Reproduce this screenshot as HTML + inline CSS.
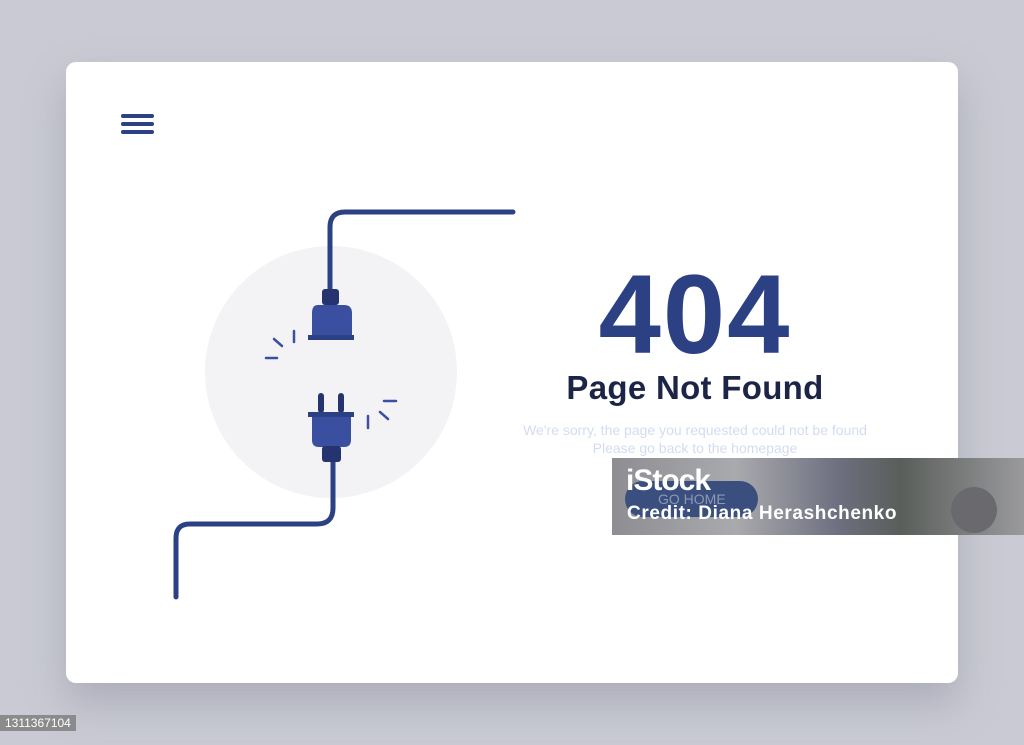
<!DOCTYPE html>
<html><head><style>
body{margin:0;width:1024px;height:745px;background:#c9cad3;position:relative;overflow:hidden;font-family:"Liberation Sans",sans-serif}
.card{position:absolute;left:66px;top:62px;width:892px;height:621px;background:#fff;border-radius:10px;box-shadow:0 20px 40px rgba(120,120,140,.35)}
.t404{position:absolute;left:540px;width:310px;top:250px;text-align:center;font-size:112px;font-weight:bold;color:#2c4084;letter-spacing:2px}
.pnf{position:absolute;left:510px;width:370px;top:369px;text-align:center;font-size:33px;font-weight:bold;color:#1d2547;letter-spacing:.3px}
.sub{position:absolute;left:500px;width:390px;top:421px;text-align:center;font-size:14px;line-height:18px;color:#d3dcf0}
.wm{position:absolute;left:612px;top:458px;width:412px;height:77px;background:linear-gradient(90deg,#8e8e92,#a9aaad 30%,#6e6f80 55%,#5a5e5a 70%,#9a9a9d);}
.wm .btn{position:absolute;left:13px;top:23px;width:133px;height:36px;border-radius:18px;background:#3a4f7e}
.wm .c{position:absolute;left:339px;top:29px;width:46px;height:46px;border-radius:50%;background:#6a6a6e}
.wm .i{position:absolute;left:14px;top:6px;color:#fff;font-size:30px;font-weight:bold;letter-spacing:-1px}
.wm .cr{position:absolute;left:15px;top:45px;color:#fff;font-size:19px;font-weight:bold;letter-spacing:.6px}
.wm .g{position:absolute;left:46px;top:33px;color:#8d97b5;font-size:14px}
.id{position:absolute;left:0;top:715px;background:#8b8b8e;color:#fff;font-size:12px;padding:1px 5px}
</style></head><body>
<div class="card"></div>
<svg style="position:absolute;left:0;top:0" width="1024" height="745">
<g stroke="#2c4084" stroke-width="4" stroke-linecap="round">
<line x1="123" y1="116" x2="152" y2="116"/><line x1="123" y1="124" x2="152" y2="124"/><line x1="123" y1="132" x2="152" y2="132"/>
</g>
<circle cx="331" cy="372" r="126" fill="#f3f3f6"/>
<path d="M513 212 H345 Q330 212 330 227 V292" fill="none" stroke="#2c4084" stroke-width="5" stroke-linecap="round"/>
<path d="M333 460 V508 Q333 524 317 524 H190 Q176 524 176 538 V597" fill="none" stroke="#2c4084" stroke-width="5" stroke-linecap="round"/>
<rect x="322" y="289" width="17" height="16" rx="3" fill="#25346e"/>
<path d="M318 305 H344 Q352 305 352 313 V336 H312 V313 Q312 305 318 305Z" fill="#3a4fa0"/>
<rect x="308" y="335" width="46" height="5" fill="#2c4084"/>
<rect x="318" y="393" width="6" height="20" rx="3" fill="#25346e"/>
<rect x="338" y="393" width="6" height="20" rx="3" fill="#25346e"/>
<rect x="308" y="412" width="46" height="5" fill="#2c4084"/>
<path d="M312 417 H351 V440 Q351 447 344 447 H319 Q312 447 312 440Z" fill="#3a4fa0"/>
<rect x="322" y="446" width="19" height="16" rx="3" fill="#25346e"/>
<g stroke="#3a4fa0" stroke-width="2.5" stroke-linecap="round">
<line x1="274" y1="339" x2="282" y2="346"/><line x1="294" y1="331" x2="294" y2="342"/><line x1="266" y1="358" x2="277" y2="358"/>
<line x1="384" y1="401" x2="396" y2="401"/><line x1="380" y1="412" x2="388" y2="419"/><line x1="368" y1="416" x2="368" y2="428"/>
</g>
</svg>
<div class="t404">404</div>
<div class="pnf">Page Not Found</div>
<div class="sub">We're sorry, the page you requested could not be found<br>Please go back to the homepage</div>
<div class="wm"><div class="btn"></div><div class="c"></div><div class="g">GO HOME</div><div class="i">iStock</div><div class="cr">Credit: Diana Herashchenko</div></div>
<div class="id">1311367104</div>
</body></html>
